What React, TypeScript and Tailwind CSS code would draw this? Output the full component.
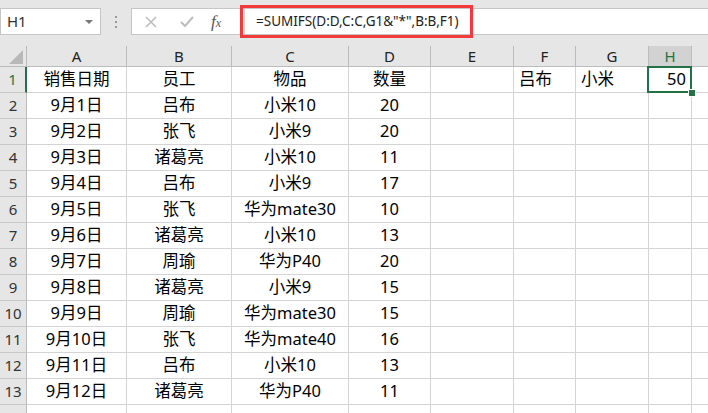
import React from "react";

const COLS = [
  { key: "A", w: 100 },
  { key: "B", w: 105 },
  { key: "C", w: 117 },
  { key: "D", w: 82 },
  { key: "E", w: 83 },
  { key: "F", w: 62 },
  { key: "G", w: 73 },
  { key: "H", w: 43 },
  { key: "", w: 40 },
];

type Row = [string, string, string, string];

const DATA: Row[] = [
  ["9月1日", "吕布", "小米10", "20"],
  ["9月2日", "张飞", "小米9", "20"],
  ["9月3日", "诸葛亮", "小米10", "11"],
  ["9月4日", "吕布", "小米9", "17"],
  ["9月5日", "张飞", "华为mate30", "10"],
  ["9月6日", "诸葛亮", "小米10", "13"],
  ["9月7日", "周瑜", "华为P40", "20"],
  ["9月8日", "诸葛亮", "小米9", "15"],
  ["9月9日", "周瑜", "华为mate30", "15"],
  ["9月10日", "张飞", "华为mate40", "16"],
  ["9月11日", "吕布", "小米10", "13"],
  ["9月12日", "诸葛亮", "华为P40", "11"],
];

const FONT = {
  fontFamily: '"Noto Sans", "Noto Sans CJK SC", sans-serif',
};

const gridCols = "27px 100px 105px 117px 82px 83px 62px 73px 43px 40px";

const Toolbar = () => (
  <div className="flex h-[46px] items-start bg-[#e6e6e6] pt-[8px]">
    <div className="flex h-[27px] w-[101px] items-center justify-between border border-[#c6c6c6] bg-white pl-[6px] pr-[7px]">
      <span className="text-[15px] text-[#333]">H1</span>
      <span className="h-0 w-0 border-x-[4px] border-t-[4px] border-x-transparent border-t-[#777]" />
    </div>
    <div className="flex h-[27px] w-[30px] flex-col items-center justify-center gap-[3px]">
      <span className="h-[2px] w-[2px] bg-[#999]" />
      <span className="h-[2px] w-[2px] bg-[#999]" />
      <span className="h-[2px] w-[2px] bg-[#999]" />
    </div>
    <div className="flex h-[27px] flex-1 border border-r-0 border-[#c6c6c6] bg-white">
      <div className="flex w-[112px] items-center">
        <svg width="14" height="14" viewBox="0 0 14 14" className="ml-[12px]">
          <path d="M2 2 L12 12 M12 2 L2 12" stroke="#bdbdbd" strokeWidth="1.6" />
        </svg>
        <svg width="16" height="14" viewBox="0 0 16 14" className="ml-[21px]">
          <path d="M2 7 L6 11 L14 2" stroke="#bdbdbd" strokeWidth="2" fill="none" />
        </svg>
        <span
          className="ml-[16px] text-[17px] italic leading-none text-[#555]"
          style={{ fontFamily: '"Liberation Serif", serif' }}
        >
          f<span className="text-[12px]">x</span>
        </span>
      </div>
      <div className="relative flex flex-1 items-center border-l border-[#d0d0d0] pl-[11px]">
        <div className="absolute left-[-5px] top-[-4px] h-[33px] w-[233px] border-[3px] border-[#f23a3a]" />
        <span className="whitespace-nowrap text-[13.5px] text-[#222]">=SUMIFS(D:D,C:C,G1&amp;"*",B:B,F1)</span>
      </div>
    </div>
  </div>
);

const App = () => {
  const headerCell = (c: { key: string; w: number }, idx: number) => {
    const sel = c.key === "H";
    return (
      <div
        key={idx}
        className={`flex h-[21px] items-center justify-center border-r border-b border-[#bcbcbc] text-[15px] ${
          sel ? "bg-[#d2d2d2] text-[#217346]" : "bg-[#e6e6e6] text-[#222]"
        }`}
      >
        {c.key}
      </div>
    );
  };

  const rows: string[][] = [
    ["销售日期", "员工", "物品", "数量", "", "吕布", "小米", "50", ""],
    ...DATA.map((r) => [...r, "", "", "", "", ""]),
    ["", "", "", "", "", "", "", "", ""],
  ];

  return (
    <div className="h-[413px] w-[708px] overflow-hidden bg-white" style={FONT}>
      <Toolbar />
      <div className="grid" style={{ gridTemplateColumns: gridCols }}>
        <div className="flex h-[21px] items-end justify-end border-r border-b border-[#bcbcbc] bg-[#e6e6e6] pb-[2px] pr-[3px]">
          <span className="h-0 w-0 border-b-[14px] border-l-[14px] border-b-[#b8b8b8] border-l-transparent" />
        </div>
        {COLS.map(headerCell)}
        {rows.map((r, i) => (
          <React.Fragment key={i}>
            <div
              className={`flex h-[26px] items-center justify-center border-b border-[#c8c8c8] bg-[#e6e6e6] text-[15px] ${
                i === 0
                  ? "border-r-2 border-r-[#217346] text-[#217346]"
                  : "border-r border-r-[#bcbcbc] text-[#333]"
              }`}
            >
              {i < 13 ? i + 1 : ""}
            </div>
            {r.map((v, j) => {
              const isLeft = i === 0 && (j === 5 || j === 6);
              const isRight = i === 0 && j === 7;
              const sel = i === 0 && j === 7;
              return (
                <div
                  key={j}
                  className={`relative flex h-[26px] items-center border-r border-b border-[#d4d4d4] text-[16.5px] text-black ${
                    isLeft ? "justify-start pl-[5px]" : isRight ? "justify-end pr-[5px]" : "justify-center"
                  } ${sel ? "z-10" : ""}`}
                >
                  {v}
                  {sel && (
                    <>
                      <div className="absolute left-[-2px] top-[-1px] h-[27px] w-[45px] border-2 border-[#217346]" />
                      <div className="absolute bottom-[-5px] right-[-5px] h-[8px] w-[8px] border border-white bg-[#217346]" />
                    </>
                  )}
                </div>
              );
            })}
          </React.Fragment>
        ))}
      </div>
    </div>
  );
};

export default App;
